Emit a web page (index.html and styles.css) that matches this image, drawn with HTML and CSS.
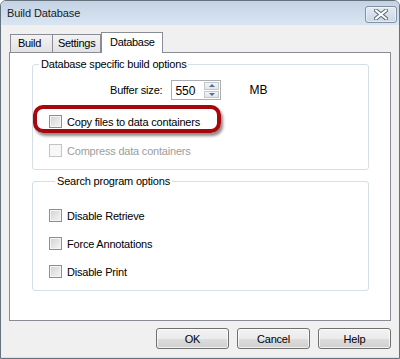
FILE: index.html
```
<!DOCTYPE html>
<html lang="en">
<head>
  <meta charset="UTF-8">
  <title>Build Database</title>
  <link rel="stylesheet" href="styles.css">
</head>
<body>

<div class="window">
  <div class="titlebar">
    <span class="title">Build Database</span>
    <button class="close-button">
      <svg width="14" height="11" viewBox="0 0 14 11">
        <path d="M2 1.5 L12 9.5 M12 1.5 L2 9.5" stroke="#5b6570" stroke-width="4" stroke-linecap="square"/>
        <path d="M2 1.5 L12 9.5 M12 1.5 L2 9.5" stroke="#ffffff" stroke-width="2" stroke-linecap="square"/>
      </svg>
    </button>
  </div>

  <div class="client">
    <div class="tabs">
      <div class="tab tab-build">Build</div>
      <div class="tab tab-settings">Settings</div>
      <div class="tab tab-database active">Database</div>
    </div>

    <div class="panel">
      <fieldset class="group group-db">
        <legend>Database specific build options</legend>
        <div class="buffer-row">
          <span class="buffer-label">Buffer size:</span>
          <div class="spin-input">
            <span class="spin-value">550</span>
            <div class="spinner">
              <span class="spin-btn"><span class="arrow-up"></span></span>
              <span class="spin-btn"><span class="arrow-down"></span></span>
            </div>
          </div>
          <span class="unit">MB</span>
        </div>
        <div class="highlight">
          <label class="check"><span class="box"></span>Copy files to data containers</label>
        </div>
        <label class="check disabled compress"><span class="box"></span>Compress data containers</label>
      </fieldset>

      <fieldset class="group group-search">
        <legend>Search program options</legend>
        <label class="check first"><span class="box"></span>Disable Retrieve</label>
        <label class="check"><span class="box"></span>Force Annotations</label>
        <label class="check"><span class="box"></span>Disable Print</label>
      </fieldset>
    </div>

    <div class="buttons">
      <button class="dlg-button">OK</button>
      <button class="dlg-button">Cancel</button>
      <button class="dlg-button">Help</button>
    </div>
  </div>
</div>

</body>
</html>
```
FILE: styles.css
```
body {
  margin: 0;
  padding: 0;
  background-color: #ffffff;
  font-family: "Liberation Sans", Arial, sans-serif;
  font-size: 11px;
  color: #000000;
}
.window {
  width: 400px;
  height: 359px;
  box-sizing: border-box;
  border: 1px solid #66717e;
  border-radius: 6px 6px 0 0;
  background-color: #f0f0f0;
  display: flex;
  flex-direction: column;
  overflow: hidden;
}
.titlebar {
  height: 24px;
  flex: none;
  display: flex;
  justify-content: space-between;
  align-items: center;
  padding: 0 2px 0 6px;
  background: linear-gradient(#c4d3e4, #d9e5f2);
}
.title {
  font-size: 11px;
  letter-spacing: -0.1px;
  color: #1b1b1b;
}
.close-button {
  width: 32px;
  height: 17px;
  margin-top: 2px;
  padding: 0;
  border: 1px solid #8290a2;
  border-radius: 3px;
  background: linear-gradient(#e3eaf2, #cbd7e5);
  box-shadow: inset 0 0 0 1px rgba(255,255,255,0.5);
  display: flex;
  justify-content: center;
  align-items: center;
}
.client {
  flex: 1;
  display: flex;
  flex-direction: column;
  padding: 7px 8px 0 8px;
  border-bottom: 1px solid #d6e2ef;
}
.tabs {
  height: 20px;
  display: flex;
  align-items: flex-end;
  padding-left: 1px;
}
.tab {
  height: 18px;
  box-sizing: border-box;
  border: 1px solid #898c95;
  border-bottom: none;
  background: linear-gradient(#f3f3f3, #e2e2e2);
  padding: 2px 0 0 7px;
  font-size: 11px;
  letter-spacing: -0.3px;
}
.tab-build {
  width: 43px;
}
.tab-settings {
  width: 48px;
  border-left: none;
  padding-left: 5px;
}
.tab-database {
  width: 62px;
}
.tab.active {
  height: 21px;
  margin-bottom: -1px;
  background: #ffffff;
  padding: 3px 0 0 8px;
  position: relative;
  z-index: 1;
}
.panel {
  height: 269px;
  box-sizing: border-box;
  border: 1px solid #898c95;
  background-color: #ffffff;
  padding-top: 5px;
}
.group {
  margin: 0 0 0 22px;
  padding: 0;
  width: 337px;
  box-sizing: border-box;
  border: 1px solid #d5dfe5;
  border-radius: 3px;
  min-width: 0;
}
.group legend {
  margin-left: 6px;
  padding: 0 2px;
  line-height: 13px;
  letter-spacing: -0.2px;
}
.group-db {
  padding-bottom: 12px;
}
.group-search {
  margin-top: 5px;
  padding: 0 0 12px 16px;
}
.buffer-row {
  display: flex;
  align-items: center;
  height: 20px;
  margin-top: 9px;
  padding-left: 77px;
}
.buffer-label {
  letter-spacing: -0.2px;
}
.spin-input {
  display: flex;
  width: 50px;
  height: 20px;
  box-sizing: border-box;
  margin-left: 9px;
  border: 1px solid #abadb3;
  background: #ffffff;
}
.spin-value {
  flex: 1;
  padding: 3px 0 0 3px;
  font-size: 12px;
}
.spinner {
  width: 15px;
  display: flex;
  flex-direction: column;
  gap: 1px;
  padding: 1px 1px 1px 0;
}
.spin-btn {
  flex: 1;
  border: 1px solid #c4c8cc;
  background: linear-gradient(#f4f4f4, #e2e4e6);
  display: flex;
  justify-content: center;
  align-items: center;
}
.arrow-up {
  width: 0;
  height: 0;
  border-left: 3px solid transparent;
  border-right: 3px solid transparent;
  border-bottom: 3px solid #4d6fa8;
}
.arrow-down {
  width: 0;
  height: 0;
  border-left: 3px solid transparent;
  border-right: 3px solid transparent;
  border-top: 3px solid #4d6fa8;
}
.unit {
  margin-left: 28px;
  font-size: 12px;
}
.highlight {
  width: 188px;
  box-sizing: border-box;
  margin-top: 5px;
  border: 4px solid #a8070b;
  border-radius: 10px;
  padding: 6px 0 1px 12px;
  box-shadow: 2px 3px 3px rgba(0,0,0,0.45);
}
.check {
  display: flex;
  align-items: center;
  height: 13px;
  letter-spacing: -0.2px;
}
.check .box {
  width: 13px;
  height: 13px;
  box-sizing: border-box;
  flex: none;
  margin-right: 5px;
  border: 1px solid #8e8f8f;
  background: linear-gradient(135deg, #cfd2d5, #f6f6f6);
  box-shadow: inset 0 0 0 1px #f4f4f4;
}
.group-db .compress {
  margin: 11px 0 0 16px;
}
.group-search .check {
  margin-top: 15px;
}
.group-search .check.first {
  margin-top: 21px;
}
.check.disabled {
  color: #9d9d9d;
}
.check.disabled .box {
  border-color: #c4c4c4;
  background: #f7f7f7;
  box-shadow: none;
}
.buttons {
  display: flex;
  justify-content: flex-end;
  gap: 8px;
  margin-top: 7px;
}
.dlg-button {
  width: 73px;
  height: 21px;
  padding: 0;
  border: 1px solid #707070;
  border-radius: 3px;
  background: linear-gradient(#f2f2f2 0%, #ebebeb 50%, #dddddd 51%, #cfcfcf 100%);
  box-shadow: inset 0 0 0 1px rgba(255,255,255,0.7);
  font-family: "Liberation Sans", Arial, sans-serif;
  font-size: 11px;
  letter-spacing: -0.2px;
  color: #000000;
}
```
